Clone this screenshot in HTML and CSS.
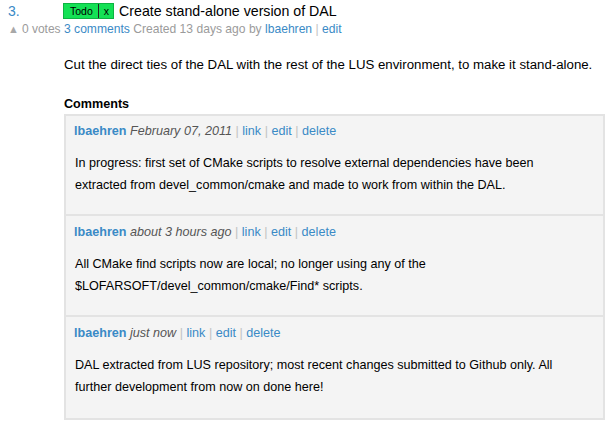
FILE: index.html
```html
<!DOCTYPE html>
<html>
<head>
<meta charset="utf-8">
<link rel="stylesheet" href="styles.css">
</head>
<body>
<div class="issue">
  <div class="row head">
    <div class="left num">3.</div>
    <div class="main title-line">
      <span class="badge"><span class="badge-label">Todo</span><span class="badge-x">x</span></span>
      <span class="title">Create stand-alone version of DAL</span>
    </div>
  </div>
  <div class="row sub">
    <div class="left votes"><span class="tri">▲</span>0 votes</div>
    <div class="main meta"><a class="link">3 comments</a> Created 13 days ago by <a class="link">lbaehren</a> <span class="sep">|</span> <a class="link">edit</a></div>
  </div>
  <div class="content">
    <p class="desc">Cut the direct ties of the DAL with the rest of the LUS environment, to make it stand-alone.</p>
    <h3 class="comments-h">Comments</h3>
    <div class="comments">
      <div class="comment">
        <div class="c-meta"><a class="user">lbaehren</a> <em class="when">February 07, 2011</em> <span class="sep">|</span> <a class="link">link</a> <span class="sep">|</span> <a class="link">edit</a> <span class="sep">|</span> <a class="link">delete</a></div>
        <p class="c-body">In progress: first set of CMake scripts to resolve external dependencies have been extracted from devel_common/cmake and made to work from within the DAL.</p>
      </div>
      <div class="comment">
        <div class="c-meta"><a class="user">lbaehren</a> <em class="when">about 3 hours ago</em> <span class="sep">|</span> <a class="link">link</a> <span class="sep">|</span> <a class="link">edit</a> <span class="sep">|</span> <a class="link">delete</a></div>
        <p class="c-body">All CMake find scripts now are local; no longer using any of the<br>$LOFARSOFT/devel_common/cmake/Find* scripts.</p>
      </div>
      <div class="comment">
        <div class="c-meta"><a class="user">lbaehren</a> <em class="when">just now</em> <span class="sep">|</span> <a class="link">link</a> <span class="sep">|</span> <a class="link">edit</a> <span class="sep">|</span> <a class="link">delete</a></div>
        <p class="c-body">DAL extracted from LUS repository; most recent changes submitted to Github only. All further development from now on done here!</p>
      </div>
    </div>
  </div>
</div>
</body>
</html>
```
FILE: styles.css
```css
html, body {
  margin: 0;
  padding: 0;
  background: #ffffff;
  font-family: "Liberation Sans", Arial, Helvetica, sans-serif;
  color: #000;
}
.issue {
  padding: 2px 5px 0 8px;
}
.row {
  display: flex;
  align-items: center;
}
.left {
  width: 56px;
  flex: none;
}
.head {
  height: 18px;
}
.num {
  color: #3a8ac6;
  font-size: 14px;
}
.title-line {
  display: flex;
  align-items: center;
  gap: 5px;
  margin-left: -1px;
}
.badge {
  display: inline-flex;
  align-items: center;
  height: 14px;
  background: #14e155;
  border: 1px solid #0db342;
  font-size: 10.5px;
  line-height: 14px;
}
.badge-label {
  padding: 0 5px 0 6px;
  border-right: 1px solid #222;
  height: 14px;
}
.badge-x {
  padding: 0 4px 0 5px;
}
.title {
  font-size: 14.2px;
}
.sub {
  height: 18px;
  font-size: 12.1px;
}
.votes {
  color: #9b9b9b;
  font-size: 12px;
  white-space: nowrap;
}
.tri {
  font-size: 11px;
  color: #a8a8a8;
  margin-right: 3px;
}
.meta {
  color: #9b9b9b;
}
.link, .user {
  color: #3a8ac6;
  text-decoration: none;
}
.sep {
  color: #c2c2c2;
}
.content {
  padding-left: 56px;
}
.desc {
  margin: 16px 0 0 0;
  font-size: 13.25px;
  line-height: 22px;
}
.comments-h {
  margin: 20px 0 2px 0;
  font-size: 12.6px;
  line-height: 16px;
  font-weight: bold;
}
.comments {
  background: #f4f4f4;
  border: 2px solid #e3e3e3;
}
.comment {
  padding: 6px 30px 18px 8px;
}
.comment + .comment {
  border-top: 2px solid #e3e3e3;
  padding-top: 7px;
}
.comment:last-child {
  padding-bottom: 20px;
}
.c-meta {
  font-size: 12.6px;
  line-height: 18px;
  color: #9b9b9b;
}
.user {
  font-weight: bold;
}
.when {
  color: #555;
}
.c-body {
  margin: 12px 0 0 1px;
  font-size: 12.6px;
  line-height: 22px;
}
```
